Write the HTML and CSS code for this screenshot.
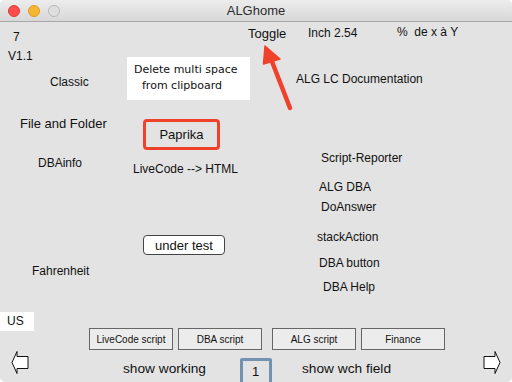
FILE: index.html
```html
<!DOCTYPE html>
<html>
	<head>
		<meta charset="UTF-8">
		<title>ALGhome</title>
		<link rel="stylesheet" href="styles.css">
	</head>
	<body>
		<div class="window">
			<div class="titlebar">
				<div class="lights">
					<span class="light red"></span>
					<span class="light yellow"></span>
					<span class="light off"></span>
				</div>
				<div class="title">ALGhome</div>
			</div>

			<!-- card: controls sit where the stack author dropped them -->
			<div class="card">
				<span class="lbl" style="left:13px; top:7px;">7</span>
				<span class="lbl" style="left:8px; top:26px;">V1.1</span>
				<span class="lbl big" style="left:248px; top:4px;">Toggle</span>
				<span class="lbl" style="left:308px; top:3px;">Inch 2.54</span>
				<span class="lbl pre" style="left:397px; top:2px;">%  de x à Y</span>

				<span class="lbl" style="left:50px; top:52px;">Classic</span>
				<div class="note" style="left:127px; top:35px;">
					<div>Delete multi space</div>
					<div class="indent">from clipboard</div>
				</div>
				<span class="lbl" style="left:296px; top:49px;">ALG LC Documentation</span>

				<span class="lbl big" style="left:20px; top:94px;">File and Folder</span>
				<div class="paprika" style="left:143px; top:97px;">Paprika</div>

				<span class="lbl" style="left:38px; top:133px;">DBAinfo</span>
				<span class="lbl" style="left:133px; top:139px;">LiveCode --&gt; HTML</span>
				<span class="lbl" style="left:321px; top:128px;">Script-Reporter</span>
				<span class="lbl" style="left:319px; top:157px;">ALG DBA</span>
				<span class="lbl" style="left:321px; top:177px;">DoAnswer</span>

				<div class="btn round" style="left:143px; top:213px;">under test</div>
				<span class="lbl" style="left:317px; top:207px;">stackAction</span>
				<span class="lbl" style="left:32px; top:241px;">Fahrenheit</span>
				<span class="lbl" style="left:319px; top:233px;">DBA button</span>
				<span class="lbl" style="left:323px; top:257px;">DBA Help</span>

				<div class="field us" style="left:0px; top:290px;">US</div>

				<div class="btnrow" style="left:89px; top:306px;">
					<div class="btn sq">LiveCode script</div>
					<div class="btn sq">DBA script</div>
					<div class="btn sq gap">ALG script</div>
					<div class="btn sq">Finance</div>
				</div>

				<svg class="nav" style="left:11px; top:329px;" width="18" height="23" viewBox="0 0 18 23">
					<polygon points="1,11.5 6,0.5 6,5.5 17,5.5 17,17.5 6,17.5 6,22.5" fill="#fff" stroke="#111" stroke-width="1"/>
				</svg>
				<svg class="nav" style="left:483px; top:329px;" width="18" height="23" viewBox="0 0 18 23">
					<polygon points="17,11.5 12,0.5 12,5.5 1,5.5 1,17.5 12,17.5 12,22.5" fill="#fff" stroke="#111" stroke-width="1"/>
				</svg>

				<span class="lbl show" style="left:123px; top:339px;">show working</span>
				<div class="numfield" style="left:240px; top:336px;">1</div>
				<span class="lbl show" style="left:302px; top:339px;">show wch field</span>

				<svg class="mark" width="512" height="140" viewBox="0 0 512 140">
					<line x1="290" y1="86" x2="271" y2="37" stroke="#f0412b" stroke-width="4.5" stroke-linecap="round"/>
					<polygon points="265,24 263.5,42 280,37" fill="#f0412b" stroke="#f0412b" stroke-width="1.5" stroke-linejoin="round"/>
				</svg>
			</div>
		</div>
	</body>
</html>
```

FILE: styles.css
```css
* {
	margin: 0;
	padding: 0;
	box-sizing: border-box;
}

body {
	width: 512px;
	height: 382px;
	background: #fff;
	font-family: "Liberation Sans", Arial, sans-serif;
	color: #111;
	overflow: hidden;
}

.window {
	width: 512px;
	height: 382px;
	display: flex;
	flex-direction: column;
	background: #e3e3e3;
	border-radius: 5px;
	overflow: hidden;
}

.titlebar {
	height: 22px;
	position: relative;
	display: flex;
	align-items: center;
	justify-content: center;
	background: linear-gradient(#ececec, #d8d8d8);
	border-bottom: 1px solid #a8a8a8;
	flex: none;
}

.lights {
	position: absolute;
	left: 8px;
	top: 5px;
	display: flex;
	gap: 8px;
}

.light {
	width: 12px;
	height: 12px;
	border-radius: 50%;
}
.light.red {
	background: #fc4d4a;
	border: 1px solid #df3a37;
}
.light.yellow {
	background: #f7b632;
	border: 1px solid #dc9c22;
}
.light.off {
	background: #dedede;
	border: 1px solid #b8b8b8;
}

.title {
	font-size: 13px;
	color: #2b2b2b;
	line-height: 16px;
}

.card {
	position: relative;
	flex: 1;
}

.lbl {
	position: absolute;
	font-size: 12px;
	line-height: 16px;
	white-space: nowrap;
}
.lbl.big {
	font-size: 13px;
}
.lbl.pre {
	white-space: pre;
}
.lbl.show {
	font-size: 13.7px;
}

.note {
	position: absolute;
	width: 123px;
	height: 43px;
	background: #fff;
	padding: 5px 0 0 7px;
	font-family: "DejaVu Sans", sans-serif;
	font-size: 11px;
	line-height: 16px;
	color: #111;
}
.note .indent {
	padding-left: 8px;
}

.paprika {
	position: absolute;
	width: 77px;
	height: 31px;
	border: 3px solid #f0412b;
	border-radius: 4px;
	font-size: 13px;
	display: flex;
	align-items: center;
	justify-content: center;
}

.btn {
	background: #fff;
	border: 1px solid #555;
	display: flex;
	align-items: center;
	justify-content: center;
}
.btn.round {
	position: absolute;
	width: 82px;
	height: 20px;
	border-radius: 4px;
	font-size: 13px;
	border-color: #444;
}

.btnrow {
	position: absolute;
	display: flex;
	gap: 5px;
}
.btn.sq {
	width: 84px;
	height: 22px;
	background: #ececec;
	border-color: #666;
	font-size: 10px;
}
.btn.sq.gap {
	margin-left: 5px;
}

.field {
	position: absolute;
	background: #fff;
}
.field.us {
	width: 34px;
	height: 19px;
	font-size: 12px;
	line-height: 19px;
	padding-left: 7px;
}

.nav {
	position: absolute;
}

.numfield {
	position: absolute;
	width: 32px;
	height: 30px;
	border: 3px solid #7192b1;
	border-radius: 2px;
	font-size: 13px;
	line-height: 16px;
	padding: 3px 0 0 9px;
}

.mark {
	position: absolute;
	left: 0;
	top: 0;
	pointer-events: none;
}
```
